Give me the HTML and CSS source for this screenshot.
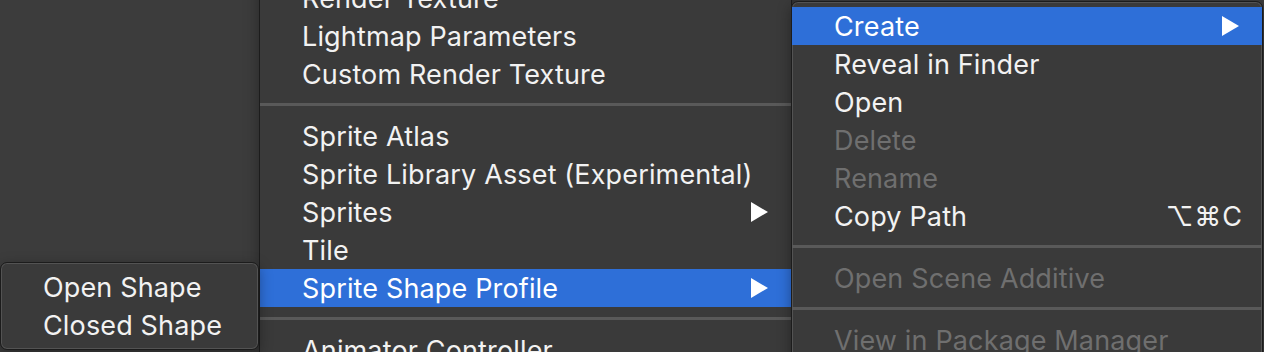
FILE: index.html
```html
<!DOCTYPE html>
<html lang="en">
<head>
    <meta charset="UTF-8">
    <title>Project context menu</title>
    <link rel="stylesheet" href="styles.css">
</head>
<body>
    <div class="desktop">
        <!-- Create > ... submenu -->
        <div class="menu menu-create">
            <div class="item">Render Texture</div>
            <div class="item">Lightmap Parameters</div>
            <div class="item">Custom Render Texture</div>
            <div class="separator"></div>
            <div class="item">Sprite Atlas</div>
            <div class="item">Sprite Library Asset (Experimental)</div>
            <div class="item">Sprites<span class="arrow"></span></div>
            <div class="item">Tile</div>
            <div class="item selected">Sprite Shape Profile<span class="arrow"></span></div>
            <div class="separator"></div>
            <div class="item">Animator Controller</div>
        </div>

        <!-- main context menu -->
        <div class="menu menu-main rounded">
            <div class="item selected">Create<span class="arrow"></span></div>
            <div class="item">Reveal in Finder</div>
            <div class="item">Open</div>
            <div class="item disabled">Delete</div>
            <div class="item disabled">Rename</div>
            <div class="item">Copy Path<span class="shortcut">⌥⌘C</span></div>
            <div class="separator"></div>
            <div class="item disabled">Open Scene Additive</div>
            <div class="separator"></div>
            <div class="item disabled">View in Package Manager</div>
        </div>

        <!-- Sprite Shape Profile submenu -->
        <div class="menu menu-shape rounded">
            <div class="item">Open Shape</div>
            <div class="item">Closed Shape</div>
        </div>
    </div>
</body>
</html>
```

FILE: styles.css
```css
:root {
    --desk-background: #3c3c3c;
    --menu-background: #3a3a3a;
    --menu-border: #1c1c1c;
    --text-color: #f2f2f2;
    --disabled-color: #6f6f6f;
    --selected-background: #2e6fd8;
    --separator-color: #595959;
}
body {
    margin: 0;
    background-color: var(--desk-background);
    font-family: Inter, "Noto Sans", sans-serif;
    font-size: 27px;
    letter-spacing: 0.15px;
    color: var(--text-color);
    overflow: hidden;
}
.desktop {
    position: relative;
    width: 1264px;
    height: 352px;
    overflow: hidden;
}
.menu {
    position: absolute;
    display: flex;
    flex-direction: column;
    background-color: var(--menu-background);
    border: 1px solid var(--menu-border);
    box-shadow: 0 4px 14px rgba(0, 0, 0, 0.35);
}
.rounded {
    border-radius: 7px;
    padding: 5px 0;
    box-shadow: inset 0 0 0 1px rgba(255, 255, 255, 0.13), 0 4px 14px rgba(0, 0, 0, 0.35);
}
.menu-create {
    left: 259px;
    top: -22px;
    width: 531px;
}
.menu-main {
    left: 791px;
    top: 1px;
    width: 470px;
}
.menu-shape {
    left: 0;
    top: 262px;
    width: 257px;
}
.item {
    display: flex;
    align-items: center;
    height: 38px;
    padding: 0 19px 0 42px;
    white-space: nowrap;
}
.selected {
    background-color: var(--selected-background);
    color: #fff;
}
.disabled {
    color: var(--disabled-color);
}
.arrow {
    margin-left: auto;
    margin-right: 4px;
    width: 0;
    height: 0;
    border-top: 10px solid transparent;
    border-bottom: 10px solid transparent;
    border-left: 17px solid #fff;
}
.shortcut {
    margin-left: auto;
    letter-spacing: 1px;
}
.separator {
    height: 3px;
    margin: 10px 0 11px;
    background-color: var(--separator-color);
}
```
